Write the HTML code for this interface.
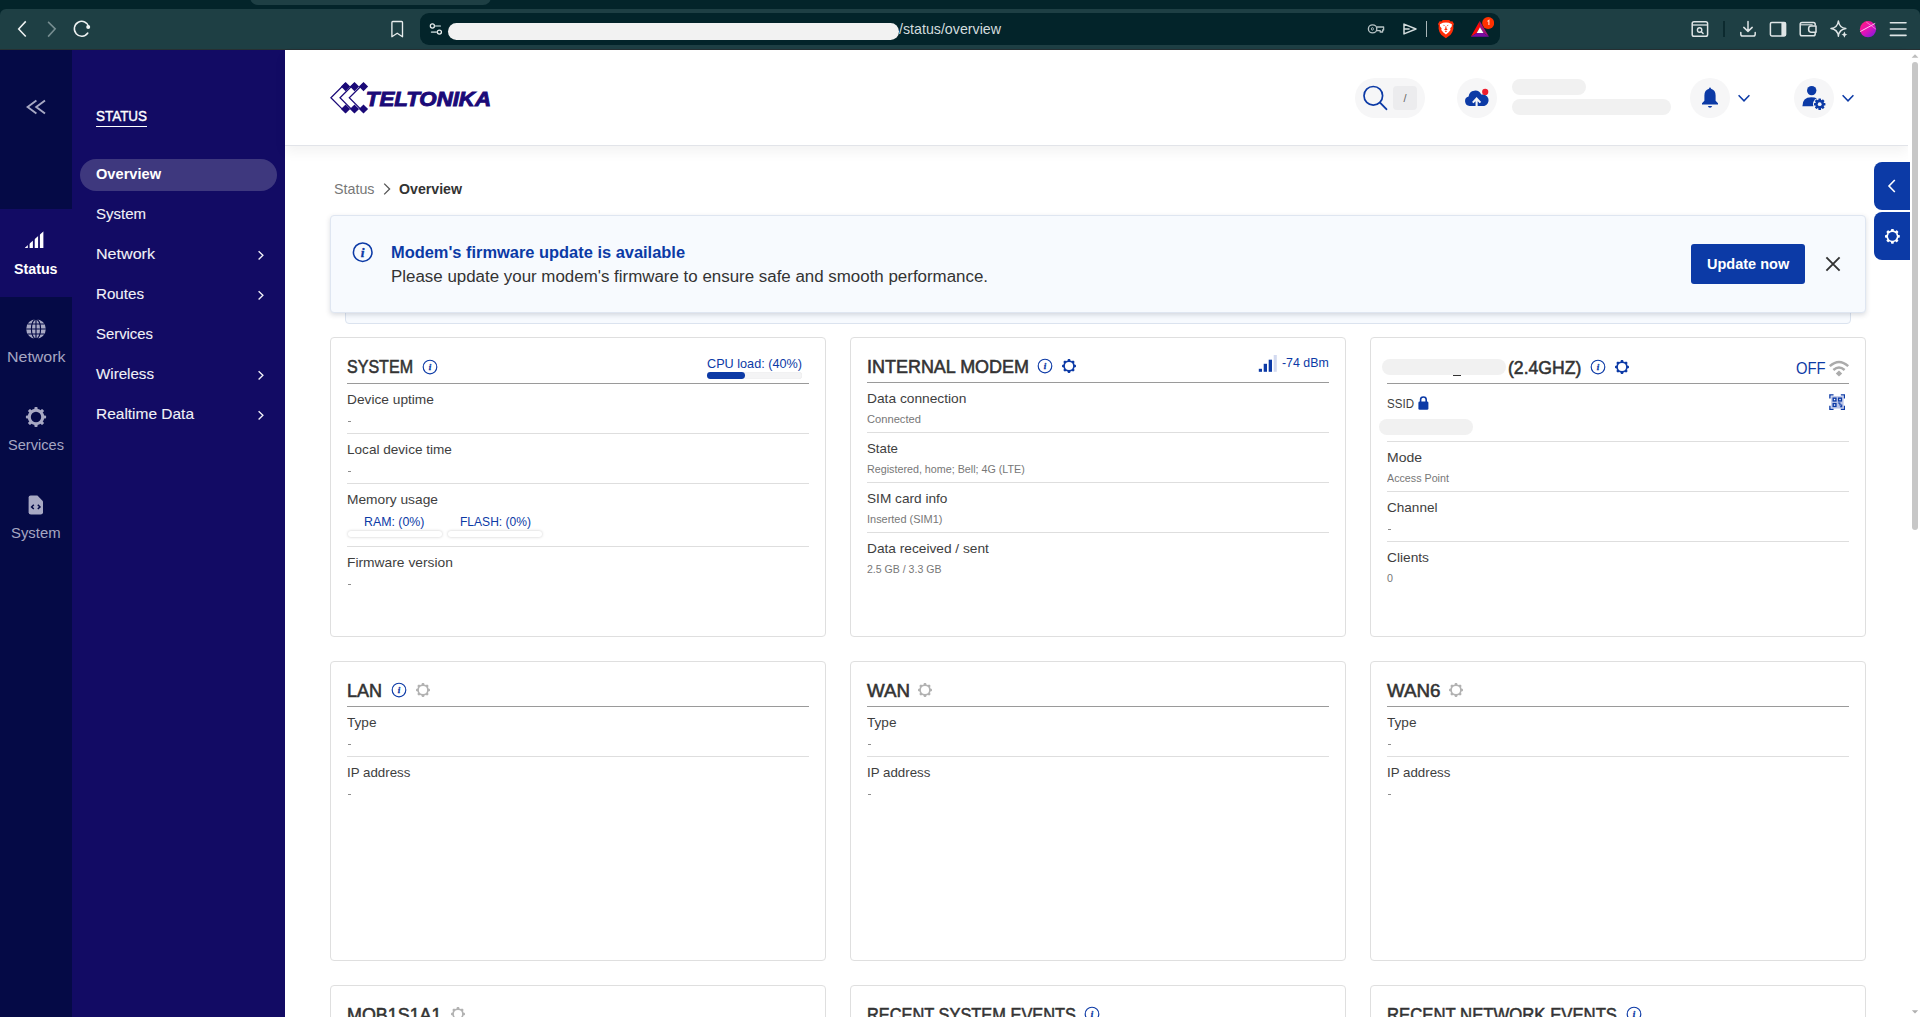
<!DOCTYPE html>
<html lang="en"><head><meta charset="utf-8"><title>Status - Overview</title>
<style>
html,body{margin:0;padding:0;background:#fff;}
body{width:1920px;height:1017px;overflow:hidden;position:relative;font-family:"Liberation Sans",sans-serif;}
#root{position:absolute;left:0;top:0;width:1920px;height:1017px;overflow:hidden;}
#root div,#root span,#root svg{position:absolute;display:block;box-sizing:border-box;}
#root span{white-space:nowrap;}
</style></head><body><div id="root">
<div style="left:0px;top:0px;width:1920px;height:50px;background:#03242a;"></div>
<div style="left:249.5px;top:-8px;width:241.5px;height:12.8px;background:#1e3f44;border-radius:0 0 8px 8px;"></div>
<div style="left:0px;top:9px;width:1920px;height:41px;background:#1e3f44;border-radius:6px 6px 0 0;border-bottom:1px solid #263033;"></div>
<div style="left:420px;top:13px;width:1080px;height:32px;background:#03242a;border-radius:9px;"></div>
<svg style="left:10px;top:18px;" width="90" height="24" viewBox="0 0 90 24" fill="none"><path d="M15.75 3.4 L8.7 10.9 L15.75 18.6" stroke="#eef2f2" stroke-width="1.55" stroke-linecap="butt" stroke-linejoin="miter"/><path d="M38.1 3.9 L45.2 10.9 L38.1 18.6" stroke="#768d90" stroke-width="1.55" stroke-linecap="butt" stroke-linejoin="miter"/><path d="M78.9 8.83 A7.4 7.4 0 1 0 77.8 15.0" stroke="#eef2f2" stroke-width="1.5" stroke-linecap="round"/><circle cx="78.2" cy="9.1" r="2.0" fill="#eef2f2"/></svg>
<svg style="left:388px;top:18px;" width="20" height="24" viewBox="0 0 20 24" fill="none"><path d="M3.9 4.4 Q3.9 3.5 4.8 3.5 H13.6 Q14.5 3.5 14.5 4.4 V18.7 L9.2 15.3 L3.9 18.7 Z" stroke="#e9eded" stroke-width="1.35" stroke-linejoin="round"/></svg>
<svg style="left:426px;top:20px;" width="20" height="18" viewBox="0 0 20 18" fill="none"><circle cx="6.4" cy="6.0" r="2.05" stroke="#e9eded" stroke-width="1.3"/><path d="M9.4 6.0 H14.2" stroke="#9db0b2" stroke-width="1.7" stroke-linecap="round"/><circle cx="13.4" cy="12.1" r="2.05" stroke="#e9eded" stroke-width="1.3"/><path d="M5.6 12.1 H10.4" stroke="#9db0b2" stroke-width="1.7" stroke-linecap="round"/></svg>
<div style="left:448px;top:22.5px;width:451px;height:17px;background:#f2f2f2;border-radius:8.5px;"></div>
<span style="left:899.00px;top:19.00px;font-size:14.3px;line-height:20px;color:#d3dcde;transform:scaleX(0.9950);transform-origin:0 50%;">/status/overview</span>
<svg style="left:1366px;top:21px;" width="22" height="16" viewBox="0 0 22 16" fill="none"><ellipse cx="6.6" cy="7.9" rx="4.2" ry="4.0" stroke="#b7c3c5" stroke-width="1.35"/><ellipse cx="6.4" cy="7.9" rx="1.0" ry="1.3" stroke="#b7c3c5" stroke-width="0.9"/><path d="M10.6 6.0 H17.6 V9.0 H16.6 V11.0 H14.2 V9.6 H10.6" stroke="#b7c3c5" stroke-width="1.3" stroke-linejoin="round"/></svg>
<svg style="left:1401px;top:21px;" width="18" height="16" viewBox="0 0 18 16" fill="none"><path d="M3 3.1 L15 8 L3 12.9 Z M3.2 8 H8.6" stroke="#d4dcdd" stroke-width="1.5" stroke-linejoin="round"/></svg>
<div style="left:1426px;top:21px;width:1.3px;height:16px;background:#a9b6b8;"></div>
<svg style="left:1436px;top:19px;" width="20" height="20" viewBox="0 0 20 20" fill="none"><path d="M6.8 0.9 H13.2 L14.6 2.4 L16.4 2.2 L18 4.9 L17.3 6.6 L17.4 9.8 Q16.6 14 14.6 15.8 L9.9 19.3 L5.2 15.8 Q3.2 14 2.6 9.8 L2.7 6.6 L2 4.9 L3.6 2.2 L5.4 2.4 Z" fill="#ff2d07"/><path d="M3.9 5.2 L7 3.7 Q9.9 3.2 12.8 3.7 L15.9 5.2 L15.7 7.4 L14.2 9.3 L14.5 11 L12.4 13.4 L9.9 15.5 L7.4 13.4 L5.3 11 L5.6 9.3 L4.1 7.4 Z" fill="#fff"/><path d="M7.4 5.7 L9 6.3 L7.8 7 Z M12.4 5.7 L10.8 6.3 L12 7 Z M9.5 7.2 H10.3 L10.5 9.6 L11.7 10.6 L9.9 11.6 L8.1 10.6 L9.3 9.6 Z M8.6 12.6 L9.9 12 L11.2 12.6 L9.9 13.3 Z" fill="#ff2d07"/></svg>
<svg style="left:1468px;top:15px;" width="26" height="24" viewBox="0 0 26 24" fill="none"><path d="M11.7 6 L2.8 21.8 L8.7 18 L12 12.2 Z" fill="#ff0a0a"/><path d="M11.7 6 L21 21.8 L15.5 18 L12 12.2 Z" fill="#a5127c"/><path d="M2.8 21.8 H21 L15.5 18 H8.7 Z" fill="#7b0ba3"/><path d="M12 12.2 L15.5 18 H8.7 Z" fill="#fff"/><circle cx="20.2" cy="8" r="6" fill="#ff3100"/><path d="M19.4 6.4 L20.9 5.4 V10" stroke="#ffe2da" stroke-width="1.1" fill="none"/></svg>
<svg style="left:1690px;top:20px;" width="20" height="18" viewBox="0 0 20 18" fill="none"><rect x="2.2" y="1.8" width="15.4" height="14.4" rx="1.8" stroke="#dfe5e6" stroke-width="1.5"/><path d="M2.2 5 H17.6" stroke="#dfe5e6" stroke-width="1.3"/><circle cx="9.6" cy="10" r="2.2" stroke="#dfe5e6" stroke-width="1.4"/><path d="M11.3 11.7 L13.1 13.5" stroke="#dfe5e6" stroke-width="1.4" stroke-linecap="round"/></svg>
<div style="left:1723.3px;top:21px;width:1.6px;height:16px;background:#0c2a2f;"></div>
<svg style="left:1738px;top:19px;" width="20" height="20" viewBox="0 0 20 20" fill="none"><path d="M10 2.6 V12.2 M5.8 8.4 L10 12.4 L14.2 8.4" stroke="#dfe5e6" stroke-width="1.5" stroke-linecap="round" stroke-linejoin="round"/><path d="M2.8 13.4 V15.2 Q2.8 17 4.6 17 H15.4 Q17.2 17 17.2 15.2 V13.4" stroke="#dfe5e6" stroke-width="1.5" stroke-linecap="round"/></svg>
<svg style="left:1768px;top:20px;" width="20" height="18" viewBox="0 0 20 18" fill="none"><rect x="2.4" y="2.4" width="15.2" height="13.6" rx="1.4" stroke="#dfe5e6" stroke-width="1.5"/><rect x="13.4" y="2.4" width="4.2" height="13.6" fill="#dfe5e6"/></svg>
<svg style="left:1798px;top:20px;" width="20" height="18" viewBox="0 0 20 18" fill="none"><path d="M17.2 5.6 V4.4 Q17.2 2.6 15.4 2.6 H4 Q2.2 2.6 2.2 4.4 V14 Q2.2 15.8 4 15.8 H15.4 Q17.2 15.8 17.2 14 V12.6" stroke="#dfe5e6" stroke-width="1.5"/><path d="M18 6 H12.8 Q10.6 6 10.6 9.1 Q10.6 12.2 12.8 12.2 H18 Z" stroke="#dfe5e6" stroke-width="1.5" stroke-linejoin="round"/><path d="M2.6 4.8 H14.6" stroke="#dfe5e6" stroke-width="1.1"/></svg>
<svg style="left:1828px;top:19px;" width="22" height="22" viewBox="0 0 22 22" fill="none"><path d="M10.4 2 Q11.2 8.6 17.8 9.6 Q11.2 10.6 10.4 17.2 Q9.6 10.6 3 9.6 Q9.6 8.6 10.4 2 Z" stroke="#dfe5e6" stroke-width="1.5" stroke-linejoin="round"/><path d="M16.4 12.4 Q16.9 15.1 19.4 15.6 Q16.9 16.1 16.4 18.8 Q15.9 16.1 13.4 15.6 Q15.9 15.1 16.4 12.4 Z" fill="#dfe5e6"/></svg>
<svg style="left:1858px;top:19px;" width="20" height="20" viewBox="0 0 20 20" fill="none"><defs><linearGradient id="av" x1="0.1" y1="0" x2="0.9" y2="1"><stop offset="0" stop-color="#ff1a7a"/><stop offset="0.5" stop-color="#e412b8"/><stop offset="1" stop-color="#7a1be0"/></linearGradient></defs><circle cx="10" cy="10.2" r="8.1" fill="url(#av)"/><path d="M2.2 12.6 L17.2 4.4" stroke="#ffd9f2" stroke-width="0.9"/><path d="M8.2 3 L17.8 10" stroke="#ff9be0" stroke-width="0.7"/></svg>
<svg style="left:1888px;top:20px;" width="20" height="18" viewBox="0 0 20 18" fill="none"><path d="M2.4 2.7 H18 M2.4 9 H18 M2.4 15.4 H18" stroke="#dfe5e6" stroke-width="1.6" stroke-linecap="round"/></svg>
<div style="left:0px;top:50px;width:72px;height:967px;background:#050a46;"></div>
<div style="left:72px;top:50px;width:213px;height:967px;background:#120b64;"></div>
<div style="left:0px;top:209px;width:72px;height:88px;background:#120b64;"></div>
<svg style="left:24px;top:97px;" width="24" height="20" viewBox="0 0 24 20" fill="none"><path d="M12.4 3.4 L3.6 10 L12.4 16.6 M21 3.4 L12.2 10 L21 16.6" stroke="#a8a9c4" stroke-width="1.9" stroke-linecap="butt" stroke-linejoin="miter"/></svg>
<svg style="left:24px;top:230px;" width="22" height="20" viewBox="0 0 22 20" fill="none"><defs><clipPath id="tri"><path d="M0.6 18 L19.6 1.2 V18 Z"/></clipPath></defs><g clip-path="url(#tri)" fill="#fff"><rect x="0.6" y="0" width="3.2" height="18"/><rect x="5.6" y="0" width="3.3" height="18"/><rect x="10.7" y="0" width="3.4" height="18"/><rect x="15.9" y="0" width="3.7" height="18"/></g></svg>
<span style="left:14.25px;top:259.00px;font-size:14px;line-height:20px;color:#fff;font-weight:700;transform:scaleX(1.0168);transform-origin:0 50%;">Status</span>
<svg style="left:25px;top:318px;" width="22" height="22" viewBox="0 0 22 22" fill="none"><circle cx="11" cy="11" r="9.8" fill="#a8a9c4"/><g stroke="#050a46" stroke-width="1.15" fill="none"><path d="M11 1 V21 M1 11 H21 M2.6 6 H19.4 M2.6 16 H19.4"/><ellipse cx="11" cy="11" rx="4.6" ry="9.8"/></g></svg>
<span style="left:6.75px;top:347.00px;font-size:14.5px;line-height:20px;color:#a5a6c2;transform:scaleX(1.1001);transform-origin:0 50%;">Network</span>
<svg style="left:25px;top:406px;" width="22" height="22" viewBox="0 0 22 22" fill="none"><g fill="#a8a9c4"><circle cx="11" cy="11" r="8.3"/><rect x="9.4" y="0.9" width="3.2" height="4" rx="1" transform="rotate(0 11 11)"/><rect x="9.4" y="0.9" width="3.2" height="4" rx="1" transform="rotate(45 11 11)"/><rect x="9.4" y="0.9" width="3.2" height="4" rx="1" transform="rotate(90 11 11)"/><rect x="9.4" y="0.9" width="3.2" height="4" rx="1" transform="rotate(135 11 11)"/><rect x="9.4" y="0.9" width="3.2" height="4" rx="1" transform="rotate(180 11 11)"/><rect x="9.4" y="0.9" width="3.2" height="4" rx="1" transform="rotate(225 11 11)"/><rect x="9.4" y="0.9" width="3.2" height="4" rx="1" transform="rotate(270 11 11)"/><rect x="9.4" y="0.9" width="3.2" height="4" rx="1" transform="rotate(315 11 11)"/></g><circle cx="11" cy="11" r="5.2" fill="#050a46"/></svg>
<span style="left:8.00px;top:435.00px;font-size:14.5px;line-height:20px;color:#a5a6c2;transform:scaleX(1.0072);transform-origin:0 50%;">Services</span>
<svg style="left:27px;top:494px;" width="18" height="22" viewBox="0 0 18 22" fill="none"><path d="M3.6 1.6 H10.4 L16 7.2 V18.2 Q16 20.6 13.6 20.6 H4 Q1.6 20.6 1.6 18.2 V3.6 Q1.6 1.6 3.6 1.6 Z" fill="#a8a9c4"/><path d="M6.8 10.8 L4.6 12.9 L6.8 15 M10.8 10.8 L13 12.9 L10.8 15" stroke="#050a46" stroke-width="1.5" fill="none"/></svg>
<span style="left:11.25px;top:523.00px;font-size:14.5px;line-height:20px;color:#a5a6c2;transform:scaleX(1.0240);transform-origin:0 50%;">System</span>
<span style="left:96.00px;top:105.70px;font-size:14.5px;line-height:20px;color:#fff;transform:scaleX(0.9265);transform-origin:0 50%;-webkit-text-stroke:0.4px #fff;">STATUS</span>
<div style="left:96px;top:125.6px;width:51px;height:1.4px;background:#fff;"></div>
<div style="left:80px;top:159px;width:197px;height:32px;background:#3e387e;border-radius:16px;"></div>
<span style="left:96.00px;top:164.00px;font-size:14.5px;line-height:20px;color:#fff;font-weight:700;transform:scaleX(1.0080);transform-origin:0 50%;">Overview</span>
<span style="left:96.00px;top:204.00px;font-size:15px;line-height:20px;color:#f1f1f7;-webkit-text-stroke:0.1px #f1f1f7;">System</span>
<span style="left:96.00px;top:244.00px;font-size:15px;line-height:20px;color:#f1f1f7;transform:scaleX(1.0725);transform-origin:0 50%;-webkit-text-stroke:0.1px #f1f1f7;">Network</span>
<svg style="left:256px;top:248.5px;" width="10" height="12" viewBox="0 0 10 12" fill="none"><path d="M2.6 2.2 L6.9 6.3 L2.6 10.4" stroke="#f1f1f7" stroke-width="1.35" stroke-linecap="butt"/></svg>
<span style="left:96.00px;top:284.00px;font-size:15px;line-height:20px;color:#f1f1f7;transform:scaleX(1.0100);transform-origin:0 50%;-webkit-text-stroke:0.1px #f1f1f7;">Routes</span>
<svg style="left:256px;top:288.5px;" width="10" height="12" viewBox="0 0 10 12" fill="none"><path d="M2.6 2.2 L6.9 6.3 L2.6 10.4" stroke="#f1f1f7" stroke-width="1.35" stroke-linecap="butt"/></svg>
<span style="left:96.00px;top:324.00px;font-size:15px;line-height:20px;color:#f1f1f7;transform:scaleX(0.9910);transform-origin:0 50%;-webkit-text-stroke:0.1px #f1f1f7;">Services</span>
<span style="left:96.00px;top:364.00px;font-size:15px;line-height:20px;color:#f1f1f7;transform:scaleX(1.0087);transform-origin:0 50%;-webkit-text-stroke:0.1px #f1f1f7;">Wireless</span>
<svg style="left:256px;top:368.5px;" width="10" height="12" viewBox="0 0 10 12" fill="none"><path d="M2.6 2.2 L6.9 6.3 L2.6 10.4" stroke="#f1f1f7" stroke-width="1.35" stroke-linecap="butt"/></svg>
<span style="left:96.00px;top:404.00px;font-size:15px;line-height:20px;color:#f1f1f7;transform:scaleX(1.0312);transform-origin:0 50%;-webkit-text-stroke:0.1px #f1f1f7;">Realtime Data</span>
<svg style="left:256px;top:408.5px;" width="10" height="12" viewBox="0 0 10 12" fill="none"><path d="M2.6 2.2 L6.9 6.3 L2.6 10.4" stroke="#f1f1f7" stroke-width="1.35" stroke-linecap="butt"/></svg>
<div style="left:285px;top:50px;width:1623px;height:96px;background:#fff;border-bottom:1px solid #e2e4e9;box-shadow:0 6px 12px rgba(0,0,0,0.05);"></div>
<svg style="left:329.5px;top:80px;" width="42" height="36" viewBox="0 0 42 36" fill="none"><g fill="#1b0a78"><path d="M15.6 2.0 L20.2 6.6 L15.6 11.2 L11.0 6.6 Z"/><path d="M15.6 24.4 L20.2 29.0 L15.6 33.6 L11.0 29.0 Z"/><path d="M24.5 2.0 L29.1 6.6 L24.5 11.2 L19.9 6.6 Z"/><path d="M24.5 24.4 L29.1 29.0 L24.5 33.6 L19.9 29.0 Z"/><path d="M33.5 2.0 L38.1 6.6 L33.5 11.2 L28.9 6.6 Z"/><path d="M33.5 24.4 L38.1 29.0 L33.5 33.6 L28.9 29.0 Z"/></g><g stroke="#1b0a78" stroke-width="1.25" fill="none" stroke-linejoin="miter"><path d="M15.5 3.200000000000001 L0.9 17.8 L15.5 32.4"/><path d="M24.6 3.200000000000001 L10.0 17.8 L24.6 32.4"/><path d="M33.9 3.200000000000001 L19.3 17.8 L33.9 32.4"/></g></svg>
<svg style="left:364px;top:84px" width="132" height="28" viewBox="0 0 132 28"><text x="1.8" y="21.9" font-family="Liberation Sans, sans-serif" font-weight="700" font-style="italic" font-size="20.3" fill="#1b0a78" stroke="#1b0a78" stroke-width="0.95" textLength="125.2" lengthAdjust="spacingAndGlyphs">TELTONIKA</text></svg>
<div style="left:1355px;top:78px;width:70px;height:40px;background:#f6f6f7;border-radius:20px;"></div>
<svg style="left:1360px;top:84px;" width="30" height="30" viewBox="0 0 30 30" fill="none"><circle cx="13.3" cy="11.8" r="9.3" stroke="#0c3aa6" stroke-width="1.7"/><path d="M20 18.7 L26.4 25.2" stroke="#0c3aa6" stroke-width="1.9" stroke-linecap="round"/></svg>
<div style="left:1393px;top:86px;width:24px;height:24px;background:#ececee;border-radius:4px;"></div>
<span style="left:1403.47px;top:88.00px;font-size:11px;line-height:20px;color:#666;">/</span>
<div style="left:1457px;top:78px;width:40px;height:40px;background:#f6f6f7;border-radius:20px;"></div>
<svg style="left:1463px;top:87px;" width="28" height="22" viewBox="0 0 28 22" fill="none"><path d="M6.6 19 A4.9 4.9 0 0 1 5.6 9.4 A6.6 6.6 0 0 1 18.2 7.6 A5.7 5.7 0 0 1 21.2 19 Z" fill="#0c3aa6"/><path d="M13.6 19.4 V12.6 M9.8 15.6 L13.6 11.6 L17.4 15.6" stroke="#f6f6f7" stroke-width="2.1" fill="none" stroke-linejoin="miter"/><circle cx="22.2" cy="4.9" r="3.1" fill="#ee1c2e"/></svg>
<div style="left:1512px;top:78.6px;width:74px;height:16.2px;background:#f1f1f1;border-radius:8.1px;"></div>
<div style="left:1512px;top:99px;width:158.5px;height:16.2px;background:#f1f1f1;border-radius:8.1px;"></div>
<div style="left:1690px;top:78px;width:40px;height:40px;background:#f6f6f7;border-radius:20px;"></div>
<svg style="left:1700px;top:86px;" width="20" height="24" viewBox="0 0 20 24" fill="none"><path d="M10 1.6 Q10.9 1.6 11 2.8 Q15.6 4 15.6 9.6 V14.8 L18 17.2 V18.6 H2 V17.2 L4.4 14.8 V9.6 Q4.4 4 9 2.8 Q9.1 1.6 10 1.6 Z" fill="#0c3aa6"/><path d="M7.8 20 H12.2 Q11.6 21.8 10 21.8 Q8.4 21.8 7.8 20 Z" fill="#0c3aa6"/></svg>
<svg style="left:1737px;top:93px;" width="14" height="10" viewBox="0 0 14 10" fill="none"><path d="M1.6 2.2 L7 7.8 L12.4 2.2" stroke="#0c3aa6" stroke-width="1.5"/></svg>
<div style="left:1794px;top:78px;width:40px;height:40px;background:#f6f6f7;border-radius:20px;"></div>
<svg style="left:1800px;top:84px;" width="28" height="28" viewBox="0 0 28 28" fill="none"><circle cx="11.7" cy="6.6" r="4.7" fill="#0c3aa6"/><path d="M2.4 22.2 Q2.4 13.2 11.2 13.2 Q14.8 13.2 17 14.6 L17 22.2 Z" fill="#0c3aa6"/><circle cx="19.7" cy="20.2" r="6.7" fill="#f6f6f7"/><g fill="#0c3aa6"><rect x="18.4" y="14.5" width="2.6" height="3" rx="0.5" transform="rotate(0 19.7 20.2)"/><rect x="18.4" y="14.5" width="2.6" height="3" rx="0.5" transform="rotate(45 19.7 20.2)"/><rect x="18.4" y="14.5" width="2.6" height="3" rx="0.5" transform="rotate(90 19.7 20.2)"/><rect x="18.4" y="14.5" width="2.6" height="3" rx="0.5" transform="rotate(135 19.7 20.2)"/><rect x="18.4" y="14.5" width="2.6" height="3" rx="0.5" transform="rotate(180 19.7 20.2)"/><rect x="18.4" y="14.5" width="2.6" height="3" rx="0.5" transform="rotate(225 19.7 20.2)"/><rect x="18.4" y="14.5" width="2.6" height="3" rx="0.5" transform="rotate(270 19.7 20.2)"/><rect x="18.4" y="14.5" width="2.6" height="3" rx="0.5" transform="rotate(315 19.7 20.2)"/><circle cx="19.7" cy="20.2" r="4.4"/></g><circle cx="19.7" cy="20.2" r="1.9" fill="#f6f6f7"/></svg>
<svg style="left:1841px;top:93px;" width="14" height="10" viewBox="0 0 14 10" fill="none"><path d="M1.6 2.2 L7 7.8 L12.4 2.2" stroke="#0c3aa6" stroke-width="1.5"/></svg>
<div style="left:1908px;top:50px;width:12px;height:967px;background:#fff;"></div>
<svg style="left:1911px;top:53px;" width="8" height="6" viewBox="0 0 8 6" fill="none"><path d="M0.6 4.8 L4 1.2 L7.4 4.8 Z" fill="#bdbdbd"/></svg>
<div style="left:1912px;top:62px;width:6px;height:468px;background:#c7c7c7;border-radius:3px;"></div>
<svg style="left:1911px;top:1009px;" width="8" height="6" viewBox="0 0 8 6" fill="none"><path d="M0.8 1.2 L4 4.4 L7.2 1.2 Z" fill="#b0b0b0"/></svg>
<span style="left:334.00px;top:179.00px;font-size:15px;line-height:20px;color:#777;transform:scaleX(0.9524);transform-origin:0 50%;">Status</span>
<svg style="left:381px;top:182px;" width="12" height="14" viewBox="0 0 12 14" fill="none"><path d="M3.2 1.6 L8.6 7 L3.2 12.4" stroke="#555" stroke-width="1.3"/></svg>
<span style="left:399.00px;top:179.00px;font-size:14.5px;line-height:20px;color:#333;font-weight:700;transform:scaleX(0.9770);transform-origin:0 50%;">Overview</span>
<div style="left:345px;top:300px;width:1506px;height:24px;background:#f7fafe;border:1px solid #dbe3ef;border-radius:4px;"></div>
<div style="left:330px;top:215px;width:1536px;height:98px;background:#f7fafe;border:1px solid #dfe6f1;border-radius:4px;box-shadow:0 2px 5px rgba(50,60,85,0.18);"></div>
<svg style="left:350px;top:240px;" width="26" height="26" viewBox="0 0 26 26" fill="none"><circle cx="12.7" cy="12.2" r="9.3" stroke="#0c3aa6" stroke-width="1.55"/><text x="12.6" y="17.06" text-anchor="middle" font-family="Liberation Serif, serif" font-style="italic" font-weight="700" font-size="13.5" fill="#0c3aa6" stroke="#0c3aa6" stroke-width="0.35">i</text></svg>
<span style="left:391.00px;top:242.70px;font-size:16px;line-height:20px;color:#0c3aa6;font-weight:700;transform:scaleX(1.0260);transform-origin:0 50%;">Modem's firmware update is available</span>
<span style="left:391.00px;top:267.10px;font-size:16px;line-height:20px;color:#333;transform:scaleX(1.0565);transform-origin:0 50%;">Please update your modem's firmware to ensure safe and smooth performance.</span>
<div style="left:1691px;top:244px;width:114px;height:40px;background:#0c3aa6;border-radius:3px;"></div>
<span style="left:1707.00px;top:254.00px;font-size:14.5px;line-height:20px;color:#fff;font-weight:700;">Update now</span>
<svg style="left:1824px;top:255px;" width="18" height="18" viewBox="0 0 18 18" fill="none"><path d="M2.4 2.4 L15.6 15.6 M15.6 2.4 L2.4 15.6" stroke="#333" stroke-width="1.9"/></svg>
<div style="left:1874px;top:162px;width:36px;height:47.5px;background:#0c3aa6;border-radius:8px 0 0 8px;"></div>
<div style="left:1874px;top:212px;width:36px;height:47.5px;background:#0c3aa6;border-radius:8px 0 0 8px;"></div>
<svg style="left:1885px;top:178px;" width="14" height="16" viewBox="0 0 14 16" fill="none"><path d="M9.8 2 L4 8 L9.8 14" stroke="#fff" stroke-width="1.6"/></svg>
<svg style="left:1882px;top:226px;" width="20" height="20" viewBox="0 0 20 20" fill="none"><g fill="#fff"><circle cx="10.4" cy="10.3" r="6.0"/><rect x="9.0" y="2.9000000000000004" width="2.8" height="2.6" rx="0.7" transform="rotate(0.0 10.4 10.3)"/><rect x="9.0" y="2.9000000000000004" width="2.8" height="2.6" rx="0.7" transform="rotate(45.0 10.4 10.3)"/><rect x="9.0" y="2.9000000000000004" width="2.8" height="2.6" rx="0.7" transform="rotate(90.0 10.4 10.3)"/><rect x="9.0" y="2.9000000000000004" width="2.8" height="2.6" rx="0.7" transform="rotate(135.0 10.4 10.3)"/><rect x="9.0" y="2.9000000000000004" width="2.8" height="2.6" rx="0.7" transform="rotate(180.0 10.4 10.3)"/><rect x="9.0" y="2.9000000000000004" width="2.8" height="2.6" rx="0.7" transform="rotate(225.0 10.4 10.3)"/><rect x="9.0" y="2.9000000000000004" width="2.8" height="2.6" rx="0.7" transform="rotate(270.0 10.4 10.3)"/><rect x="9.0" y="2.9000000000000004" width="2.8" height="2.6" rx="0.7" transform="rotate(315.0 10.4 10.3)"/></g><circle cx="10.4" cy="10.3" r="4.4" fill="#0c3aa6"/></svg>
<div style="left:330px;top:337px;width:496px;height:300px;background:#fff;border:1px solid #dfdfdf;border-radius:4px;"></div>
<span style="left:347.00px;top:355.00px;font-size:18px;line-height:24px;color:#333333;transform:scaleX(0.8917);transform-origin:0 50%;-webkit-text-stroke:0.55px #333333;">SYSTEM</span>
<div style="left:347px;top:383px;width:462px;height:1px;background:#9a9a9a;"></div>
<svg style="left:421px;top:357.9px;" width="18" height="18" viewBox="0 0 18 18" fill="none"><circle cx="9" cy="9" r="6.8" stroke="#0c3aa6" stroke-width="1.15"/><text x="8.9" y="12.17" text-anchor="middle" font-family="Liberation Serif, serif" font-style="italic" font-weight="700" font-size="8.8" fill="#0c3aa6" stroke="#0c3aa6" stroke-width="0.35">i</text></svg>
<span style="left:707.00px;top:354.20px;font-size:12.8px;line-height:20px;color:#0c3aa6;transform:scaleX(0.9892);transform-origin:0 50%;">CPU load: (40%)</span>
<div style="left:707px;top:372.2px;width:95px;height:6.8px;background:#f4f4f5;border-radius:3.2px;box-shadow:inset 0 0 1px rgba(0,0,0,0.12);"></div>
<div style="left:707px;top:372.2px;width:38.2px;height:6.8px;background:#0c3aa6;border-radius:3.4px;"></div>
<span style="left:347.00px;top:390.30px;font-size:13.2px;line-height:20px;color:#3e3e3e;transform:scaleX(1.0403);transform-origin:0 50%;">Device uptime</span>
<div style="left:347.6px;top:420.59999999999997px;width:3.2px;height:1.2px;background:#8c8c8c;"></div>
<div style="left:347px;top:433.4px;width:462px;height:1px;background:#dedede;"></div>
<span style="left:347.00px;top:440.30px;font-size:13.2px;line-height:20px;color:#3e3e3e;transform:scaleX(1.0296);transform-origin:0 50%;">Local device time</span>
<div style="left:347.6px;top:470.59999999999997px;width:3.2px;height:1.2px;background:#8c8c8c;"></div>
<div style="left:347px;top:483.4px;width:462px;height:1px;background:#dedede;"></div>
<span style="left:347.00px;top:490.30px;font-size:13.2px;line-height:20px;color:#3e3e3e;transform:scaleX(1.0424);transform-origin:0 50%;">Memory usage</span>
<span style="left:364.05px;top:512.20px;font-size:12.8px;line-height:20px;color:#0c3aa6;transform:scaleX(0.9668);transform-origin:0 50%;">RAM: (0%)</span>
<span style="left:459.50px;top:512.20px;font-size:12.8px;line-height:20px;color:#0c3aa6;transform:scaleX(0.9417);transform-origin:0 50%;">FLASH: (0%)</span>
<div style="left:347.5px;top:530.6px;width:94px;height:6px;background:#fff;border-radius:3px;box-shadow:0 0 3px rgba(0,0,0,0.22);"></div>
<div style="left:448px;top:530.6px;width:94px;height:6px;background:#fff;border-radius:3px;box-shadow:0 0 3px rgba(0,0,0,0.22);"></div>
<div style="left:347px;top:546.2px;width:462px;height:1px;background:#dedede;"></div>
<span style="left:347.00px;top:553.30px;font-size:13.2px;line-height:20px;color:#3e3e3e;transform:scaleX(1.0473);transform-origin:0 50%;">Firmware version</span>
<div style="left:347.6px;top:583.6px;width:3.2px;height:1.2px;background:#8c8c8c;"></div>
<div style="left:850px;top:337px;width:496px;height:300px;background:#fff;border:1px solid #dfdfdf;border-radius:4px;"></div>
<span style="left:867.00px;top:354.80px;font-size:18px;line-height:24px;color:#333333;transform:scaleX(0.9979);transform-origin:0 50%;-webkit-text-stroke:0.55px #333333;">INTERNAL MODEM</span>
<div style="left:867px;top:382px;width:462px;height:1px;background:#9a9a9a;"></div>
<svg style="left:1036px;top:356.8px;" width="18" height="18" viewBox="0 0 18 18" fill="none"><circle cx="9" cy="9" r="6.8" stroke="#0c3aa6" stroke-width="1.15"/><text x="8.9" y="12.17" text-anchor="middle" font-family="Liberation Serif, serif" font-style="italic" font-weight="700" font-size="8.8" fill="#0c3aa6" stroke="#0c3aa6" stroke-width="0.35">i</text></svg>
<svg style="left:1059.8px;top:356.8px;" width="18" height="18" viewBox="0 0 18 18" fill="none"><g fill="#0c3aa6"><circle cx="9" cy="9" r="5.8"/><rect x="7.7" y="2.0" width="2.6" height="2.4" rx="0.7" transform="rotate(0.0 9 9)"/><rect x="7.7" y="2.0" width="2.6" height="2.4" rx="0.7" transform="rotate(45.0 9 9)"/><rect x="7.7" y="2.0" width="2.6" height="2.4" rx="0.7" transform="rotate(90.0 9 9)"/><rect x="7.7" y="2.0" width="2.6" height="2.4" rx="0.7" transform="rotate(135.0 9 9)"/><rect x="7.7" y="2.0" width="2.6" height="2.4" rx="0.7" transform="rotate(180.0 9 9)"/><rect x="7.7" y="2.0" width="2.6" height="2.4" rx="0.7" transform="rotate(225.0 9 9)"/><rect x="7.7" y="2.0" width="2.6" height="2.4" rx="0.7" transform="rotate(270.0 9 9)"/><rect x="7.7" y="2.0" width="2.6" height="2.4" rx="0.7" transform="rotate(315.0 9 9)"/></g><circle cx="9" cy="9" r="4.1" fill="#fff"/></svg>
<svg style="left:1258px;top:354px;" width="20" height="19" viewBox="0 0 20 19" fill="none"><g fill="#0c3aa6"><rect x="0.8" y="14.8" width="3.2" height="3"/><rect x="5.7" y="9.8" width="3.3" height="8"/><rect x="10.7" y="5.7" width="3.3" height="12.1"/></g><rect x="15.7" y="1" width="3.1" height="16.8" fill="#d3daf0"/></svg>
<span style="left:1282.30px;top:352.60px;font-size:12px;line-height:20px;color:#0c3aa6;transform:scaleX(1.0298);transform-origin:0 50%;">-74 dBm</span>
<span style="left:867.00px;top:389.30px;font-size:13.2px;line-height:20px;color:#3e3e3e;transform:scaleX(1.0431);transform-origin:0 50%;">Data connection</span>
<span style="left:867.00px;top:409.40px;font-size:10.7px;line-height:20px;color:#777777;transform:scaleX(1.0435);transform-origin:0 50%;">Connected</span>
<div style="left:867px;top:432.4px;width:462px;height:1px;background:#dedede;"></div>
<span style="left:867.00px;top:439.30px;font-size:13.2px;line-height:20px;color:#3e3e3e;transform:scaleX(1.0058);transform-origin:0 50%;">State</span>
<span style="left:867.00px;top:459.40px;font-size:10.7px;line-height:20px;color:#777777;transform:scaleX(1.0039);transform-origin:0 50%;">Registered, home; Bell; 4G (LTE)</span>
<div style="left:867px;top:482.4px;width:462px;height:1px;background:#dedede;"></div>
<span style="left:867.00px;top:489.30px;font-size:13.2px;line-height:20px;color:#3e3e3e;transform:scaleX(1.0353);transform-origin:0 50%;">SIM card info</span>
<span style="left:867.00px;top:509.40px;font-size:10.7px;line-height:20px;color:#777777;transform:scaleX(1.0240);transform-origin:0 50%;">Inserted (SIM1)</span>
<div style="left:867px;top:532.4px;width:462px;height:1px;background:#dedede;"></div>
<span style="left:867.00px;top:539.30px;font-size:13.2px;line-height:20px;color:#3e3e3e;transform:scaleX(1.0393);transform-origin:0 50%;">Data received / sent</span>
<span style="left:867.00px;top:559.40px;font-size:10.7px;line-height:20px;color:#777777;transform:scaleX(0.9864);transform-origin:0 50%;">2.5 GB / 3.3 GB</span>
<div style="left:1370px;top:337px;width:496px;height:300px;background:#fff;border:1px solid #dfdfdf;border-radius:4px;"></div>
<div style="left:1382px;top:358.8px;width:123.8px;height:16.2px;background:#f1f1f1;border-radius:8.1px;"></div>
<div style="left:1452.8px;top:374.9px;width:8px;height:1.3px;background:#333;"></div>
<span style="left:1508.30px;top:355.60px;font-size:18px;line-height:24px;color:#333333;transform:scaleX(0.9787);transform-origin:0 50%;-webkit-text-stroke:0.55px #333333;">(2.4GHZ)</span>
<div style="left:1387px;top:383px;width:462px;height:1px;background:#9a9a9a;"></div>
<svg style="left:1588.8px;top:358px;" width="18" height="18" viewBox="0 0 18 18" fill="none"><circle cx="9" cy="9" r="6.8" stroke="#0c3aa6" stroke-width="1.15"/><text x="8.9" y="12.17" text-anchor="middle" font-family="Liberation Serif, serif" font-style="italic" font-weight="700" font-size="8.8" fill="#0c3aa6" stroke="#0c3aa6" stroke-width="0.35">i</text></svg>
<svg style="left:1613px;top:358px;" width="18" height="18" viewBox="0 0 18 18" fill="none"><g fill="#0c3aa6"><circle cx="9" cy="9" r="5.8"/><rect x="7.7" y="2.0" width="2.6" height="2.4" rx="0.7" transform="rotate(0.0 9 9)"/><rect x="7.7" y="2.0" width="2.6" height="2.4" rx="0.7" transform="rotate(45.0 9 9)"/><rect x="7.7" y="2.0" width="2.6" height="2.4" rx="0.7" transform="rotate(90.0 9 9)"/><rect x="7.7" y="2.0" width="2.6" height="2.4" rx="0.7" transform="rotate(135.0 9 9)"/><rect x="7.7" y="2.0" width="2.6" height="2.4" rx="0.7" transform="rotate(180.0 9 9)"/><rect x="7.7" y="2.0" width="2.6" height="2.4" rx="0.7" transform="rotate(225.0 9 9)"/><rect x="7.7" y="2.0" width="2.6" height="2.4" rx="0.7" transform="rotate(270.0 9 9)"/><rect x="7.7" y="2.0" width="2.6" height="2.4" rx="0.7" transform="rotate(315.0 9 9)"/></g><circle cx="9" cy="9" r="4.1" fill="#fff"/></svg>
<span style="left:1795.80px;top:359.00px;font-size:16px;line-height:20px;color:#0c3aa6;transform:scaleX(0.9253);transform-origin:0 50%;">OFF</span>
<svg style="left:1828px;top:359.7px;" width="22" height="18" viewBox="0 0 22 18" fill="none"><g stroke="#ababab" fill="none" stroke-linecap="butt"><path d="M1.8 6.2 Q11 -2.2 20.2 6.2" stroke-width="2.5"/><path d="M5.4 10 Q11 4.8 16.6 10" stroke-width="2.4"/></g><path d="M11 10.6 L14.2 13.6 L11 16.4 L7.8 13.6 Z" fill="#ababab"/></svg>
<span style="left:1387.00px;top:394.20px;font-size:13.2px;line-height:20px;color:#3e3e3e;transform:scaleX(0.8763);transform-origin:0 50%;">SSID</span>
<svg style="left:1417px;top:395px;" width="13" height="16" viewBox="0 0 13 16" fill="none"><path d="M3.6 7 V4.6 Q3.6 2 6.4 2 Q9.2 2 9.2 4.6 V7" stroke="#0c3aa6" stroke-width="1.6" fill="none"/><rect x="1.4" y="6.4" width="10" height="8.4" rx="1.4" fill="#0c3aa6"/></svg>
<svg style="left:1828.8px;top:393.8px;" width="16.4" height="16.4" viewBox="0 0 18 18" fill="none"><rect x="2.4" y="2.4" width="13.6" height="13.6" fill="#b9c3e6"/><g stroke="#0c3aa6" stroke-width="1.5" fill="none"><path d="M1 5 V1 H5 M13 1 H17 V5 M17 13 V17 H13 M5 17 H1 V13"/><rect x="4.6" y="4.6" width="3" height="3" fill="#fff"/><rect x="10.6" y="4.6" width="3" height="3" fill="#fff"/><rect x="4.6" y="10.6" width="3" height="3" fill="#fff"/></g><path d="M10 10 h2 v2 h2 v2 h-2" stroke="#0c3aa6" stroke-width="1.1" fill="none"/></svg>
<div style="left:1379.2px;top:419.4px;width:93.4px;height:15.8px;background:#f1f1f1;border-radius:7.9px;"></div>
<div style="left:1387px;top:441px;width:462px;height:1px;background:#dedede;"></div>
<span style="left:1387.00px;top:448.30px;font-size:13.2px;line-height:20px;color:#3e3e3e;transform:scaleX(1.0601);transform-origin:0 50%;">Mode</span>
<span style="left:1387.00px;top:468.40px;font-size:10.7px;line-height:20px;color:#777777;transform:scaleX(1.0025);transform-origin:0 50%;">Access Point</span>
<div style="left:1387px;top:491.4px;width:462px;height:1px;background:#dedede;"></div>
<span style="left:1387.00px;top:498.30px;font-size:13.2px;line-height:20px;color:#3e3e3e;transform:scaleX(1.0271);transform-origin:0 50%;">Channel</span>
<div style="left:1387.6px;top:528.6px;width:3.2px;height:1.2px;background:#8c8c8c;"></div>
<div style="left:1387px;top:541.4px;width:462px;height:1px;background:#dedede;"></div>
<span style="left:1387.00px;top:548.30px;font-size:13.2px;line-height:20px;color:#3e3e3e;transform:scaleX(1.0410);transform-origin:0 50%;">Clients</span>
<span style="left:1387.00px;top:568.40px;font-size:10.7px;line-height:20px;color:#777777;">0</span>
<div style="left:330px;top:661px;width:496px;height:300px;background:#fff;border:1px solid #dfdfdf;border-radius:4px;"></div>
<span style="left:347.00px;top:678.80px;font-size:18px;line-height:24px;color:#333333;-webkit-text-stroke:0.55px #333333;">LAN</span>
<div style="left:347px;top:706px;width:462px;height:1px;background:#9a9a9a;"></div>
<svg style="left:389.5px;top:680.8px;" width="18" height="18" viewBox="0 0 18 18" fill="none"><circle cx="9" cy="9" r="6.8" stroke="#0c3aa6" stroke-width="1.15"/><text x="8.9" y="12.17" text-anchor="middle" font-family="Liberation Serif, serif" font-style="italic" font-weight="700" font-size="8.8" fill="#0c3aa6" stroke="#0c3aa6" stroke-width="0.35">i</text></svg>
<svg style="left:413.5px;top:680.8px;" width="18" height="18" viewBox="0 0 18 18" fill="none"><g fill="#b2b2b2"><circle cx="9" cy="9" r="5.8"/><rect x="7.7" y="2.0" width="2.6" height="2.4" rx="0.7" transform="rotate(0.0 9 9)"/><rect x="7.7" y="2.0" width="2.6" height="2.4" rx="0.7" transform="rotate(45.0 9 9)"/><rect x="7.7" y="2.0" width="2.6" height="2.4" rx="0.7" transform="rotate(90.0 9 9)"/><rect x="7.7" y="2.0" width="2.6" height="2.4" rx="0.7" transform="rotate(135.0 9 9)"/><rect x="7.7" y="2.0" width="2.6" height="2.4" rx="0.7" transform="rotate(180.0 9 9)"/><rect x="7.7" y="2.0" width="2.6" height="2.4" rx="0.7" transform="rotate(225.0 9 9)"/><rect x="7.7" y="2.0" width="2.6" height="2.4" rx="0.7" transform="rotate(270.0 9 9)"/><rect x="7.7" y="2.0" width="2.6" height="2.4" rx="0.7" transform="rotate(315.0 9 9)"/></g><circle cx="9" cy="9" r="4.1" fill="#fff"/></svg>
<span style="left:347.00px;top:713.30px;font-size:13.2px;line-height:20px;color:#3e3e3e;transform:scaleX(1.0309);transform-origin:0 50%;">Type</span>
<div style="left:347.6px;top:743.6px;width:3.2px;height:1.2px;background:#8c8c8c;"></div>
<div style="left:347px;top:756.4px;width:462px;height:1px;background:#dedede;"></div>
<span style="left:347.00px;top:763.30px;font-size:13.2px;line-height:20px;color:#3e3e3e;transform:scaleX(1.0102);transform-origin:0 50%;">IP address</span>
<div style="left:347.6px;top:793.6px;width:3.2px;height:1.2px;background:#8c8c8c;"></div>
<div style="left:850px;top:661px;width:496px;height:300px;background:#fff;border:1px solid #dfdfdf;border-radius:4px;"></div>
<span style="left:867.00px;top:678.80px;font-size:18px;line-height:24px;color:#333333;transform:scaleX(1.0404);transform-origin:0 50%;-webkit-text-stroke:0.55px #333333;">WAN</span>
<div style="left:867px;top:706px;width:462px;height:1px;background:#9a9a9a;"></div>
<svg style="left:916.3px;top:680.8px;" width="18" height="18" viewBox="0 0 18 18" fill="none"><g fill="#b2b2b2"><circle cx="9" cy="9" r="5.8"/><rect x="7.7" y="2.0" width="2.6" height="2.4" rx="0.7" transform="rotate(0.0 9 9)"/><rect x="7.7" y="2.0" width="2.6" height="2.4" rx="0.7" transform="rotate(45.0 9 9)"/><rect x="7.7" y="2.0" width="2.6" height="2.4" rx="0.7" transform="rotate(90.0 9 9)"/><rect x="7.7" y="2.0" width="2.6" height="2.4" rx="0.7" transform="rotate(135.0 9 9)"/><rect x="7.7" y="2.0" width="2.6" height="2.4" rx="0.7" transform="rotate(180.0 9 9)"/><rect x="7.7" y="2.0" width="2.6" height="2.4" rx="0.7" transform="rotate(225.0 9 9)"/><rect x="7.7" y="2.0" width="2.6" height="2.4" rx="0.7" transform="rotate(270.0 9 9)"/><rect x="7.7" y="2.0" width="2.6" height="2.4" rx="0.7" transform="rotate(315.0 9 9)"/></g><circle cx="9" cy="9" r="4.1" fill="#fff"/></svg>
<span style="left:867.00px;top:713.30px;font-size:13.2px;line-height:20px;color:#3e3e3e;transform:scaleX(1.0309);transform-origin:0 50%;">Type</span>
<div style="left:867.6px;top:743.6px;width:3.2px;height:1.2px;background:#8c8c8c;"></div>
<div style="left:867px;top:756.4px;width:462px;height:1px;background:#dedede;"></div>
<span style="left:867.00px;top:763.30px;font-size:13.2px;line-height:20px;color:#3e3e3e;transform:scaleX(1.0102);transform-origin:0 50%;">IP address</span>
<div style="left:867.6px;top:793.6px;width:3.2px;height:1.2px;background:#8c8c8c;"></div>
<div style="left:1370px;top:661px;width:496px;height:300px;background:#fff;border:1px solid #dfdfdf;border-radius:4px;"></div>
<span style="left:1387.00px;top:678.80px;font-size:18px;line-height:24px;color:#333333;transform:scaleX(1.0421);transform-origin:0 50%;-webkit-text-stroke:0.55px #333333;">WAN6</span>
<div style="left:1387px;top:706px;width:462px;height:1px;background:#9a9a9a;"></div>
<svg style="left:1446.8px;top:680.8px;" width="18" height="18" viewBox="0 0 18 18" fill="none"><g fill="#b2b2b2"><circle cx="9" cy="9" r="5.8"/><rect x="7.7" y="2.0" width="2.6" height="2.4" rx="0.7" transform="rotate(0.0 9 9)"/><rect x="7.7" y="2.0" width="2.6" height="2.4" rx="0.7" transform="rotate(45.0 9 9)"/><rect x="7.7" y="2.0" width="2.6" height="2.4" rx="0.7" transform="rotate(90.0 9 9)"/><rect x="7.7" y="2.0" width="2.6" height="2.4" rx="0.7" transform="rotate(135.0 9 9)"/><rect x="7.7" y="2.0" width="2.6" height="2.4" rx="0.7" transform="rotate(180.0 9 9)"/><rect x="7.7" y="2.0" width="2.6" height="2.4" rx="0.7" transform="rotate(225.0 9 9)"/><rect x="7.7" y="2.0" width="2.6" height="2.4" rx="0.7" transform="rotate(270.0 9 9)"/><rect x="7.7" y="2.0" width="2.6" height="2.4" rx="0.7" transform="rotate(315.0 9 9)"/></g><circle cx="9" cy="9" r="4.1" fill="#fff"/></svg>
<span style="left:1387.00px;top:713.30px;font-size:13.2px;line-height:20px;color:#3e3e3e;transform:scaleX(1.0309);transform-origin:0 50%;">Type</span>
<div style="left:1387.6px;top:743.6px;width:3.2px;height:1.2px;background:#8c8c8c;"></div>
<div style="left:1387px;top:756.4px;width:462px;height:1px;background:#dedede;"></div>
<span style="left:1387.00px;top:763.30px;font-size:13.2px;line-height:20px;color:#3e3e3e;transform:scaleX(1.0102);transform-origin:0 50%;">IP address</span>
<div style="left:1387.6px;top:793.6px;width:3.2px;height:1.2px;background:#8c8c8c;"></div>
<div style="left:330px;top:985px;width:496px;height:60px;background:#fff;border:1px solid #dfdfdf;border-radius:4px;"></div>
<div style="left:850px;top:985px;width:496px;height:60px;background:#fff;border:1px solid #dfdfdf;border-radius:4px;"></div>
<div style="left:1370px;top:985px;width:496px;height:60px;background:#fff;border:1px solid #dfdfdf;border-radius:4px;"></div>
<span style="left:347.00px;top:1002.60px;font-size:18px;line-height:24px;color:#333333;transform:scaleX(0.9943);transform-origin:0 50%;-webkit-text-stroke:0.55px #333333;">MOB1S1A1</span>
<div style="left:347px;top:1031px;width:462px;height:1px;background:#9a9a9a;"></div>
<svg style="left:448.6px;top:1004.6px;" width="18" height="18" viewBox="0 0 18 18" fill="none"><g fill="#b2b2b2"><circle cx="9" cy="9" r="5.8"/><rect x="7.7" y="2.0" width="2.6" height="2.4" rx="0.7" transform="rotate(0.0 9 9)"/><rect x="7.7" y="2.0" width="2.6" height="2.4" rx="0.7" transform="rotate(45.0 9 9)"/><rect x="7.7" y="2.0" width="2.6" height="2.4" rx="0.7" transform="rotate(90.0 9 9)"/><rect x="7.7" y="2.0" width="2.6" height="2.4" rx="0.7" transform="rotate(135.0 9 9)"/><rect x="7.7" y="2.0" width="2.6" height="2.4" rx="0.7" transform="rotate(180.0 9 9)"/><rect x="7.7" y="2.0" width="2.6" height="2.4" rx="0.7" transform="rotate(225.0 9 9)"/><rect x="7.7" y="2.0" width="2.6" height="2.4" rx="0.7" transform="rotate(270.0 9 9)"/><rect x="7.7" y="2.0" width="2.6" height="2.4" rx="0.7" transform="rotate(315.0 9 9)"/></g><circle cx="9" cy="9" r="4.1" fill="#fff"/></svg>
<span style="left:867.00px;top:1002.60px;font-size:18px;line-height:24px;color:#333333;transform:scaleX(0.9098);transform-origin:0 50%;-webkit-text-stroke:0.55px #333333;">RECENT SYSTEM EVENTS</span>
<div style="left:867px;top:1031px;width:462px;height:1px;background:#9a9a9a;"></div>
<svg style="left:1083px;top:1004.8px;" width="18" height="18" viewBox="0 0 18 18" fill="none"><circle cx="9" cy="9" r="6.8" stroke="#0c3aa6" stroke-width="1.15"/><text x="8.9" y="12.17" text-anchor="middle" font-family="Liberation Serif, serif" font-style="italic" font-weight="700" font-size="8.8" fill="#0c3aa6" stroke="#0c3aa6" stroke-width="0.35">i</text></svg>
<span style="left:1387.00px;top:1002.60px;font-size:18px;line-height:24px;color:#333333;transform:scaleX(0.9286);transform-origin:0 50%;-webkit-text-stroke:0.55px #333333;">RECENT NETWORK EVENTS</span>
<div style="left:1387px;top:1031px;width:462px;height:1px;background:#9a9a9a;"></div>
<svg style="left:1625px;top:1004.8px;" width="18" height="18" viewBox="0 0 18 18" fill="none"><circle cx="9" cy="9" r="6.8" stroke="#0c3aa6" stroke-width="1.15"/><text x="8.9" y="12.17" text-anchor="middle" font-family="Liberation Serif, serif" font-style="italic" font-weight="700" font-size="8.8" fill="#0c3aa6" stroke="#0c3aa6" stroke-width="0.35">i</text></svg>
</div></body></html>
